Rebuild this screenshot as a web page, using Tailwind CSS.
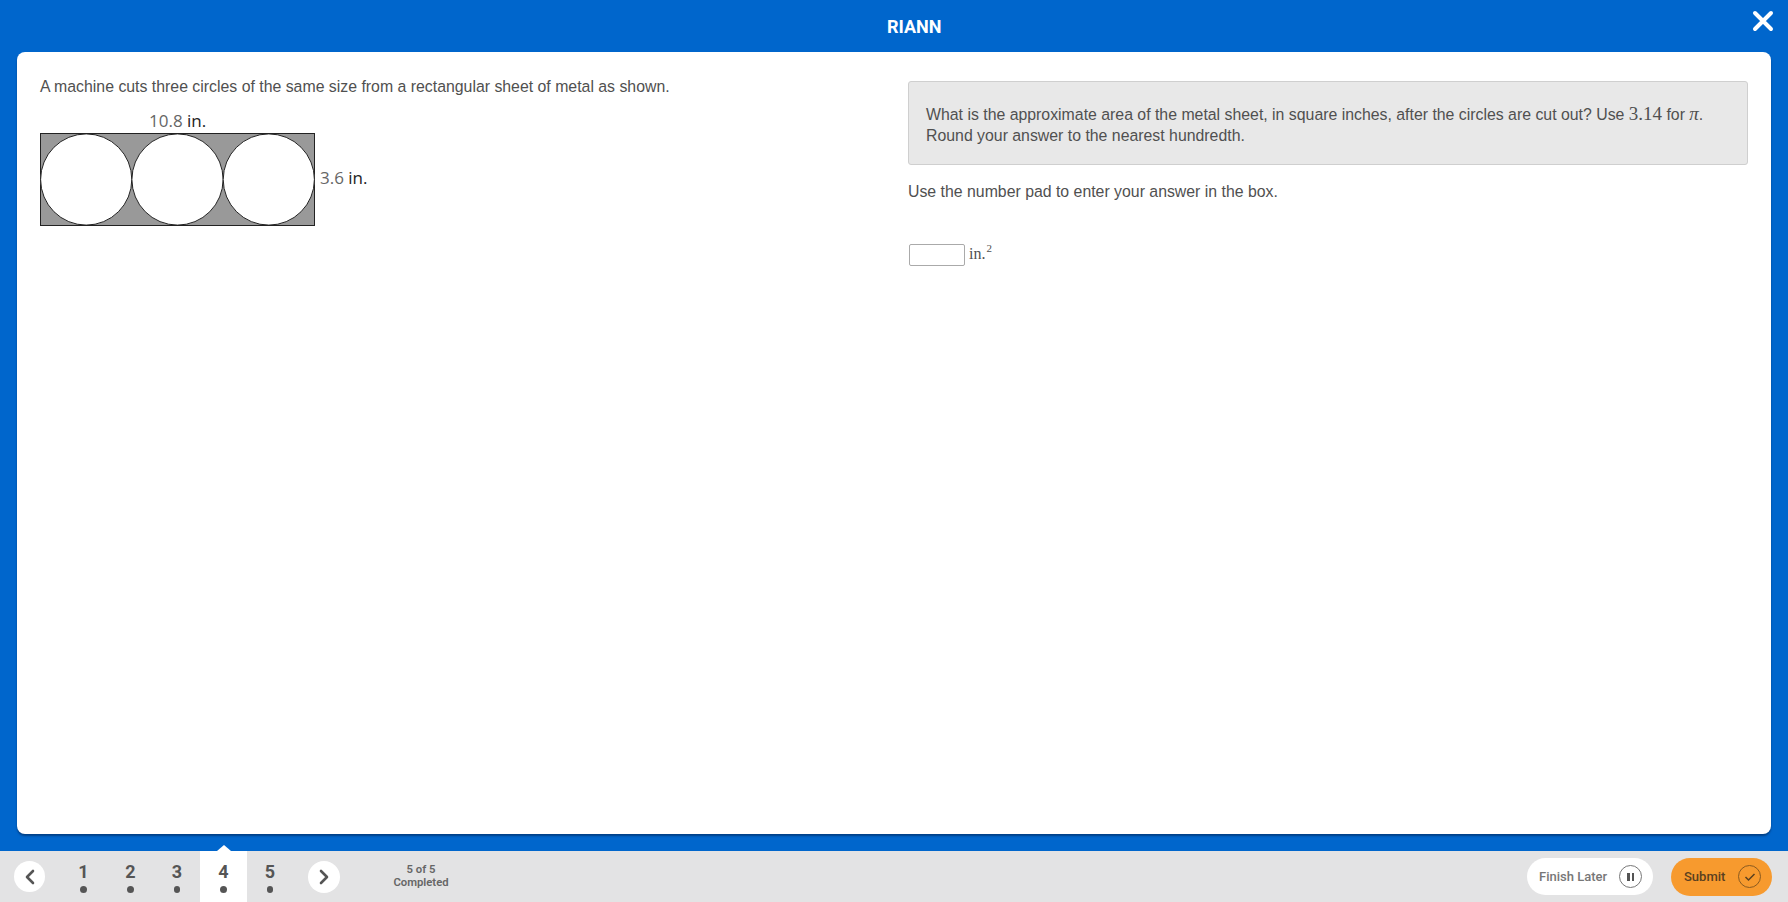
<!doctype html>
<html>
<head>
  <meta charset="UTF-8">
  <script src="https://cdn.jsdelivr.net/npm/@tailwindcss/browser@4"></script>
  <title>RIANN</title>
</head>
<body class="bg-[#0066cc] h-[902px] w-[1788px] overflow-hidden flex flex-col font-['Liberation_Sans',sans-serif] text-[#505050]">
  <!-- Header -->
  <header class="h-[52px] shrink-0 flex items-center relative">
    <h1 class="w-full pl-[887px] text-white font-['Roboto',sans-serif] font-bold text-[18px]">RIANN</h1>
    <button class="absolute right-[14px] top-[10px]">
      <svg width="22" height="22" viewBox="0 0 22 22"><path d="M3 3 L19 19 M19 3 L3 19" stroke="#fff" stroke-width="4" stroke-linecap="round"/></svg>
    </button>
  </header>

  <!-- Question card -->
  <main class="h-[782px] shrink-0 mx-[17px] bg-white rounded-lg shadow-[0_2px_2px_rgba(0,40,90,0.6)] flex text-[15.85px]">
    <section class="w-[891px] pl-[23px] pt-[25px]">
      <p class="leading-[20px]">A machine cuts three circles of the same size from a rectangular sheet of metal as shown.</p>
      <div class="relative mt-[12px] w-[400px] h-[120px] font-['Open_Sans',sans-serif] text-[17px]">
        <div class="pl-[109px] leading-[24px] text-[#666]">10.8 <span class="text-[#222]">in.</span></div>
        <svg width="276" height="94" viewBox="0 0 276 94" class="block">
          <rect x="0.5" y="0.5" width="274" height="92" fill="#999" stroke="#222"/>
          <circle cx="46.2" cy="46.5" r="45.6" fill="#fff" stroke="#222"/>
          <circle cx="137.5" cy="46.5" r="45.6" fill="#fff" stroke="#222"/>
          <circle cx="228.8" cy="46.5" r="45.6" fill="#fff" stroke="#222"/>
        </svg>
        <div class="absolute left-[280px] top-[57px] leading-[23px] text-[#666]">3.6 <span class="text-[#222]">in.</span></div>
      </div>
    </section>
    <section class="w-[840px] pt-[29px]">
      <div class="h-[84px] bg-[#e8e8e8] border border-[#cfcfcf] rounded-[3px] pl-[17px] pt-[21px] leading-[21px]">
        What is the approximate area of the metal sheet, in square inches, after the circles are cut out? Use <span class="font-['Liberation_Serif',serif] text-[19px]">3.14</span> for <span class="font-['Liberation_Serif',serif] italic text-[19px]">π</span>.<br>Round your answer to the nearest hundredth.
      </div>
      <p class="mt-[17px] leading-[20px]">Use the number pad to enter your answer in the box.</p>
      <div class="mt-[40px] flex items-center gap-[4px] font-['Liberation_Serif',serif]">
        <input type="text" class="ml-[1px] w-[56px] h-[22px] bg-white border border-[#aaa] rounded-[2px]">
        <span class="text-[16px] pb-[2px]">in.<sup class="text-[11px] -top-[7px] ml-[1px]">2</sup></span>
      </div>
    </section>
  </main>

  <!-- Footer bar -->
  <footer class="mt-[17px] h-[51px] shrink-0 bg-[#e3e3e4] flex items-stretch relative font-['Roboto',sans-serif] text-[#555]">
    <div class="flex items-center pl-[14px]">
      <button class="w-[31px] h-[31px] rounded-full bg-white flex items-center justify-center">
        <svg width="12" height="16" viewBox="0 0 12 16"><path d="M9 2 L3 8 L9 14" fill="none" stroke="#555" stroke-width="2.6" stroke-linecap="round" stroke-linejoin="round"/></svg>
      </button>
    </div>
    <nav class="flex ml-[15px] text-[18px] font-bold">
      <div class="w-[47px] flex flex-col items-center pt-[10px]"><span class="leading-[21px]">1</span><span class="mt-[4px] w-[6.5px] h-[6.5px] rounded-full bg-[#555]"></span></div>
      <div class="w-[47px] flex flex-col items-center pt-[10px]"><span class="leading-[21px]">2</span><span class="mt-[4px] w-[6.5px] h-[6.5px] rounded-full bg-[#555]"></span></div>
      <div class="w-[46px] flex flex-col items-center pt-[10px]"><span class="leading-[21px]">3</span><span class="mt-[4px] w-[6.5px] h-[6.5px] rounded-full bg-[#555]"></span></div>
      <div class="w-[47px] flex flex-col items-center pt-[10px] bg-white relative">
        <span class="absolute -top-[6px] left-[17px] w-0 h-0 border-x-[7px] border-x-transparent border-b-[6px] border-b-white"></span>
        <span class="leading-[21px]">4</span><span class="mt-[4px] w-[6.5px] h-[6.5px] rounded-full bg-[#555]"></span>
      </div>
      <div class="w-[46px] flex flex-col items-center pt-[10px]"><span class="leading-[21px]">5</span><span class="mt-[4px] w-[6.5px] h-[6.5px] rounded-full bg-[#555]"></span></div>
    </nav>
    <div class="flex items-center ml-[15px]">
      <button class="w-[32px] h-[32px] rounded-full bg-white flex items-center justify-center">
        <svg width="12" height="16" viewBox="0 0 12 16"><path d="M3 2 L9 8 L3 14" fill="none" stroke="#555" stroke-width="2.6" stroke-linecap="round" stroke-linejoin="round"/></svg>
      </button>
    </div>
    <div class="ml-[46px] w-[70px] flex flex-col justify-center items-center text-[11.3px] font-semibold leading-[13px] pb-[2px] text-[#666]">
      <span>5 of 5</span>
      <span>Completed</span>
    </div>
    <div class="ml-auto flex items-center gap-[18px] pr-[16px]">
      <button class="w-[126px] h-[37px] rounded-full bg-white flex items-center justify-between pl-[12px] pr-[11px] text-[13px] font-medium text-[#777]">
        Finish Later
        <span class="w-[23px] h-[23px] rounded-full border border-[#777] flex items-center justify-center gap-[2px]">
          <span class="w-[2.5px] h-[8px] bg-[#555]"></span><span class="w-[2.5px] h-[8px] bg-[#555]"></span>
        </span>
      </button>
      <button class="w-[101px] h-[38px] rounded-full bg-[#f79a2e] flex items-center justify-between pl-[13px] pr-[11px] text-[13px] font-medium text-[#5a4020]">
        Submit
        <span class="w-[23px] h-[23px] rounded-full border border-[#8a5a20] flex items-center justify-center">
          <svg width="12" height="10" viewBox="0 0 12 10"><path d="M1.5 5 L4.5 8 L10.5 2" fill="none" stroke="#5a4020" stroke-width="1.5"/></svg>
        </span>
      </button>
    </div>
  </footer>
</body>
</html>
